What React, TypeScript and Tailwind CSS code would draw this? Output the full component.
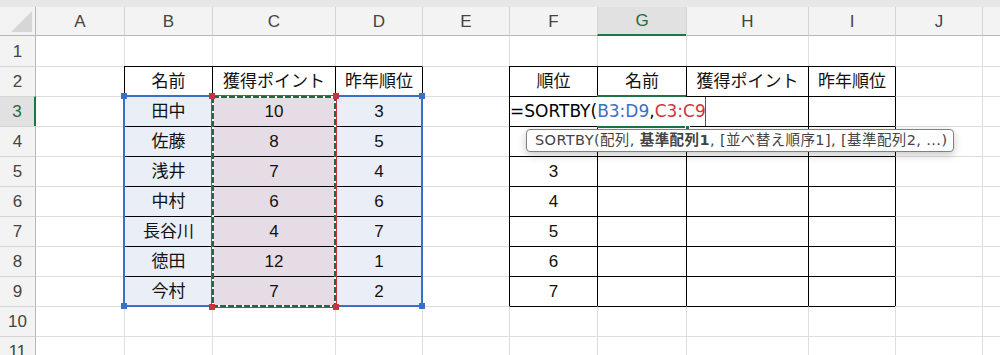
import React from "react";

const COL_LETTERS = ["A", "B", "C", "D", "E", "F", "G", "H", "I", "J", "K"];
const ROWS = [1, 2, 3, 4, 5, 6, 7, 8, 9, 10, 11];

type Fill = "blue" | "pink";
type Cell = { text?: string; fill?: Fill };

const names = ["田中", "佐藤", "浅井", "中村", "長谷川", "徳田", "今村"];
const points = ["10", "8", "7", "6", "4", "12", "7"];
const lastRank = ["3", "5", "4", "6", "7", "1", "2"];

// column index: A = 1 ... K = 11 (0 is the row header)
const inLeftTable = (c: number, r: number) => c >= 2 && c <= 4 && r >= 2 && r <= 9;
const inRightTable = (c: number, r: number) => c >= 6 && c <= 9 && r >= 2 && r <= 9;
const inTable = (c: number, r: number) => inLeftTable(c, r) || inRightTable(c, r);

function buildCells(): Record<string, Cell> {
  const m: Record<string, Cell> = {};
  const put = (c: number, r: number, cell: Cell) => {
    m[`${c}:${r}`] = cell;
  };
  put(2, 2, { text: "名前" });
  put(3, 2, { text: "獲得ポイント" });
  put(4, 2, { text: "昨年順位" });
  names.forEach((n, i) => {
    put(2, 3 + i, { text: n, fill: "blue" });
    put(3, 3 + i, { text: points[i], fill: "pink" });
    put(4, 3 + i, { text: lastRank[i], fill: "blue" });
  });
  put(6, 2, { text: "順位" });
  put(7, 2, { text: "名前" });
  put(8, 2, { text: "獲得ポイント" });
  put(9, 2, { text: "昨年順位" });
  // F4 sits under the argument tip, so the ranks visible start at 3
  for (let r = 5; r <= 9; r++) put(6, r, { text: String(r - 2) });
  return m;
}

const cells = buildCells();

function GridCell({ c, r }: { c: number; r: number }) {
  const cell = cells[`${c}:${r}`] ?? {};
  const left =
    c === 1
      ? ""
      : inTable(c, r) || inTable(c - 1, r)
      ? "border-l border-l-black"
      : "border-l border-l-[#dedede]";
  const top =
    r === 1
      ? ""
      : inTable(c, r) || inTable(c, r - 1)
      ? "border-t border-t-black"
      : "border-t border-t-[#dedede]";
  const fill =
    cell.fill === "blue" ? "bg-[#e9eef7]" : cell.fill === "pink" ? "bg-[#e6dce5]" : "bg-white";
  return (
    <div
      className={`flex items-center justify-center overflow-hidden whitespace-nowrap text-[17px] leading-none text-[#111] ${left} ${top} ${fill}`}
    >
      {cell.text}
    </div>
  );
}

function ColumnHeader({ letter, index }: { letter: string; index: number }) {
  const selected = letter === "G";
  const left = index === 0 ? "" : "border-l border-l-[#d4d4d4]";
  const tone = selected
    ? "bg-[#e1e1e1] text-[#1d6b40] border-b-2 border-b-[#217346]"
    : "bg-[#f3f3f3] text-[#444] border-b border-b-[#b8b8b8]";
  return (
    <div className={`flex items-center justify-center text-[17px] leading-none ${left} ${tone}`}>
      {letter}
    </div>
  );
}

function RowHeader({ row }: { row: number }) {
  const selected = row === 3;
  const top = row === 1 ? "" : "border-t border-t-[#d4d4d4]";
  const tone = selected
    ? "bg-[#e1e1e1] text-[#1d6b40] border-r-2 border-r-[#217346]"
    : "bg-[#f3f3f3] text-[#444] border-r border-r-[#b8b8b8]";
  return (
    <div className={`flex items-center justify-center text-[17px] leading-none ${top} ${tone}`}>
      {row}
    </div>
  );
}

// four corner squares of a reference range, placed against the range's own border
function CornerHandles({ color, offset }: { color: string; offset: "blue" | "red" }) {
  const pos =
    offset === "blue"
      ? ["-left-[4px] -top-[4px]", "-right-[4px] -top-[4px]", "-left-[4px] -bottom-[4px]", "-right-[4px] -bottom-[4px]"]
      : ["-left-[3px] -top-[3px]", "-right-[3px] -top-[3px]", "-left-[3px] -bottom-[3px]", "-right-[3px] -bottom-[3px]"];
  return (
    <>
      {pos.map((p) => (
        <div key={p} className={`absolute h-[6px] w-[6px] ${color} ${p}`} />
      ))}
    </>
  );
}

export default function App() {
  return (
    <div className="relative h-[355px] w-[1000px] overflow-hidden bg-white font-['Liberation_Sans','Noto_Sans_CJK_JP',sans-serif]">
      {/* window strip above the headers */}
      <div className="h-[7px] bg-[#e7e7e7]" />

      <div className="grid grid-cols-[36px_88px_88px_123px_87px_87px_88px_89px_122px_87px_87px_87px] grid-rows-[29px_repeat(11,30px)]">
        {/* select-all corner */}
        <div className="relative border-r border-r-[#b8b8b8] border-b border-b-[#b8b8b8] bg-[#f3f3f3]">
          <svg className="absolute bottom-[3px] right-[3px]" width="21" height="21" viewBox="0 0 21 21">
            <path d="M21 0 L21 21 L0 21 Z" fill="#d6d6d6" />
          </svg>
        </div>
        {COL_LETTERS.map((l, i) => (
          <ColumnHeader key={l} letter={l} index={i} />
        ))}

        {ROWS.map((r) => (
          <React.Fragment key={r}>
            <RowHeader row={r} />
            {COL_LETTERS.map((_, i) => (
              <GridCell key={i} c={i + 1} r={r} />
            ))}
          </React.Fragment>
        ))}
      </div>

      {/* range highlight B3:D9 */}
      <div className="absolute left-[123px] top-[95px] h-[212px] w-[300px] border-2 border-[#3b6fc6]">
        <CornerHandles color="bg-[#3b6fc6]" offset="blue" />
      </div>

      {/* range highlight C3:C9 with copy-style dashes */}
      <div className="absolute left-[211px] top-[95px] h-[213px] w-[126px] border border-[#c9343c]">
        <svg className="absolute left-0 top-0" width="124" height="211" shapeRendering="crispEdges">
          <rect x="1" y="1" width="122" height="209" fill="none" stroke="#ffffff" strokeWidth="2" />
          <rect
            x="1"
            y="1"
            width="122"
            height="209"
            fill="none"
            stroke="#1c6b3e"
            strokeWidth="2"
            strokeDasharray="6 2"
          />
        </svg>
        <CornerHandles color="bg-[#c9343c]" offset="red" />
      </div>

      {/* in-cell editor for G3 */}
      <div className="absolute left-[510px] top-[97px] flex h-[29px] w-[196px] items-center border-r border-r-[#555] bg-white font-['DejaVu_Sans',sans-serif] text-[17px] leading-none whitespace-nowrap text-black">
        <span>=SORTBY(</span>
        <span className="text-[#3d6fc6]">B3:D9</span>
        <span>,</span>
        <span className="text-[#d0343c]">C3:C9</span>
      </div>

      {/* active cell outline on G3 */}
      <div className="absolute left-[597px] top-[95px] h-[33px] w-[89px] border-y-2 border-[#217346]">
        <div className="absolute -bottom-[4px] -right-[4px] h-[5px] w-[5px] border border-white bg-[#217346]" />
      </div>

      {/* function argument tip */}
      <div className="absolute left-[526px] top-[129px] flex h-[23px] w-[428px] items-center rounded-[4px] border border-[#808080] bg-white pl-[8px] font-['DejaVu_Sans','Noto_Sans_CJK_JP',sans-serif] text-[14.5px] leading-none tracking-[0.4px] whitespace-nowrap text-[#444] shadow-[0_3px_8px_rgba(0,0,0,0.22)]">
        SORTBY(配列,&nbsp;<span className="font-bold">基準配列1</span>,&nbsp;[並べ替え順序1],&nbsp;[基準配列2,&nbsp;...)
      </div>
    </div>
  );
}
